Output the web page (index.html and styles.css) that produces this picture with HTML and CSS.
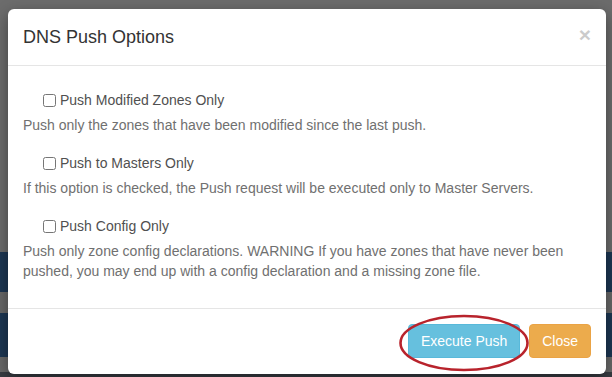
FILE: index.html
```html
<!DOCTYPE html>
<html lang="en">

<head>
    <meta charset="UTF-8">
    <meta name="viewport" content="width=device-width, initial-scale=1.0">
    <title>DNS Push Options</title>
    <link rel="stylesheet" href="styles.css">
</head>

<body>
    <div class="modal">
        <!-- Header -->
        <div class="modal-header">
            <button class="close" type="button">&times;</button>
            <h4 class="modal-title">DNS Push Options</h4>
        </div>

        <!-- Options -->
        <div class="modal-body">
            <label class="option-label"><input type="checkbox"> Push Modified Zones Only</label>
            <p class="option-desc">Push only the zones that have been modified since the last push.</p>

            <label class="option-label"><input type="checkbox"> Push to Masters Only</label>
            <p class="option-desc">If this option is checked, the Push request will be executed only to Master Servers.</p>

            <label class="option-label"><input type="checkbox"> Push Config Only</label>
            <p class="option-desc">Push only zone config declarations. WARNING If you have zones that have never been pushed, you may end up with a config declaration and a missing zone file.</p>
        </div>

        <div class="modal-footer">
            <button class="btn btn-info" type="button">Execute Push</button>
            <button class="btn btn-warning" type="button">Close</button>
            <svg class="mark" width="134" height="60" viewBox="0 0 134 60">
                <ellipse cx="67" cy="30" rx="63.5" ry="27" fill="none" stroke="#b8232c" stroke-width="2.6" />
            </svg>
        </div>
    </div>
</body>

</html>
```

FILE: styles.css
```css
body {
    margin: 0;
    height: 377px;
    overflow: hidden;
    font-family: "Liberation Sans", Arial, sans-serif;
    font-size: 14px;
    line-height: 20px;
    color: #333;
    background: linear-gradient(to bottom,
        #6c6c6c 0, #6c6c6c 252px,
        #1d3753 252px, #1d3753 292px,
        #686868 292px, #686868 313px,
        #1d3753 313px, #1d3753 357px,
        #696969 357px, #696969 372px,
        #383c42 372px);
}

.modal {
    position: relative;
    width: 598px;
    margin: 9px 0 0 8px;
    background-color: #fff;
    border-radius: 6px;
    box-shadow: 0 5px 15px rgba(0, 0, 0, 0.4);
}

.modal-header {
    padding: 15px;
    border-bottom: 1px solid #e5e5e5;
}

.modal-title {
    margin: 0;
    font-size: 18px;
    font-weight: normal;
    line-height: 26px;
    color: #333;
}

.close {
    float: right;
    margin-top: -2px;
    padding: 0;
    border: none;
    background: none;
    font-family: "Liberation Sans", Arial, sans-serif;
    font-size: 21px;
    font-weight: bold;
    line-height: 26px;
    color: #000;
    opacity: 0.2;
}

.modal-body {
    display: flex;
    flex-direction: column;
    padding: 15px 15px 18px;
}

.option-label {
    display: flex;
    align-items: center;
    margin: 9px 0 5px;
    padding-left: 20px;
    color: #505050;
}

.option-label input {
    width: 13px;
    height: 13px;
    margin: 0 4px 0 0;
}

.option-desc {
    margin: 0 0 9px;
    color: #707070;
}

.modal-footer {
    position: relative;
    padding: 15px 15px 16px;
    border-top: 1px solid #e5e5e5;
    text-align: right;
}

.btn {
    padding: 6px 12px;
    font-family: "Liberation Sans", Arial, sans-serif;
    font-size: 14px;
    line-height: 20px;
    color: #fff;
    border: 1px solid transparent;
    border-radius: 4px;
}

.btn + .btn {
    margin-left: 5px;
}

.btn-info {
    background-color: #66c0de;
    border-color: #58b9da;
}

.btn-warning {
    background-color: #ecab4c;
    border-color: #eaa345;
}

.mark {
    position: absolute;
    left: 389px;
    top: 4px;
}
```
